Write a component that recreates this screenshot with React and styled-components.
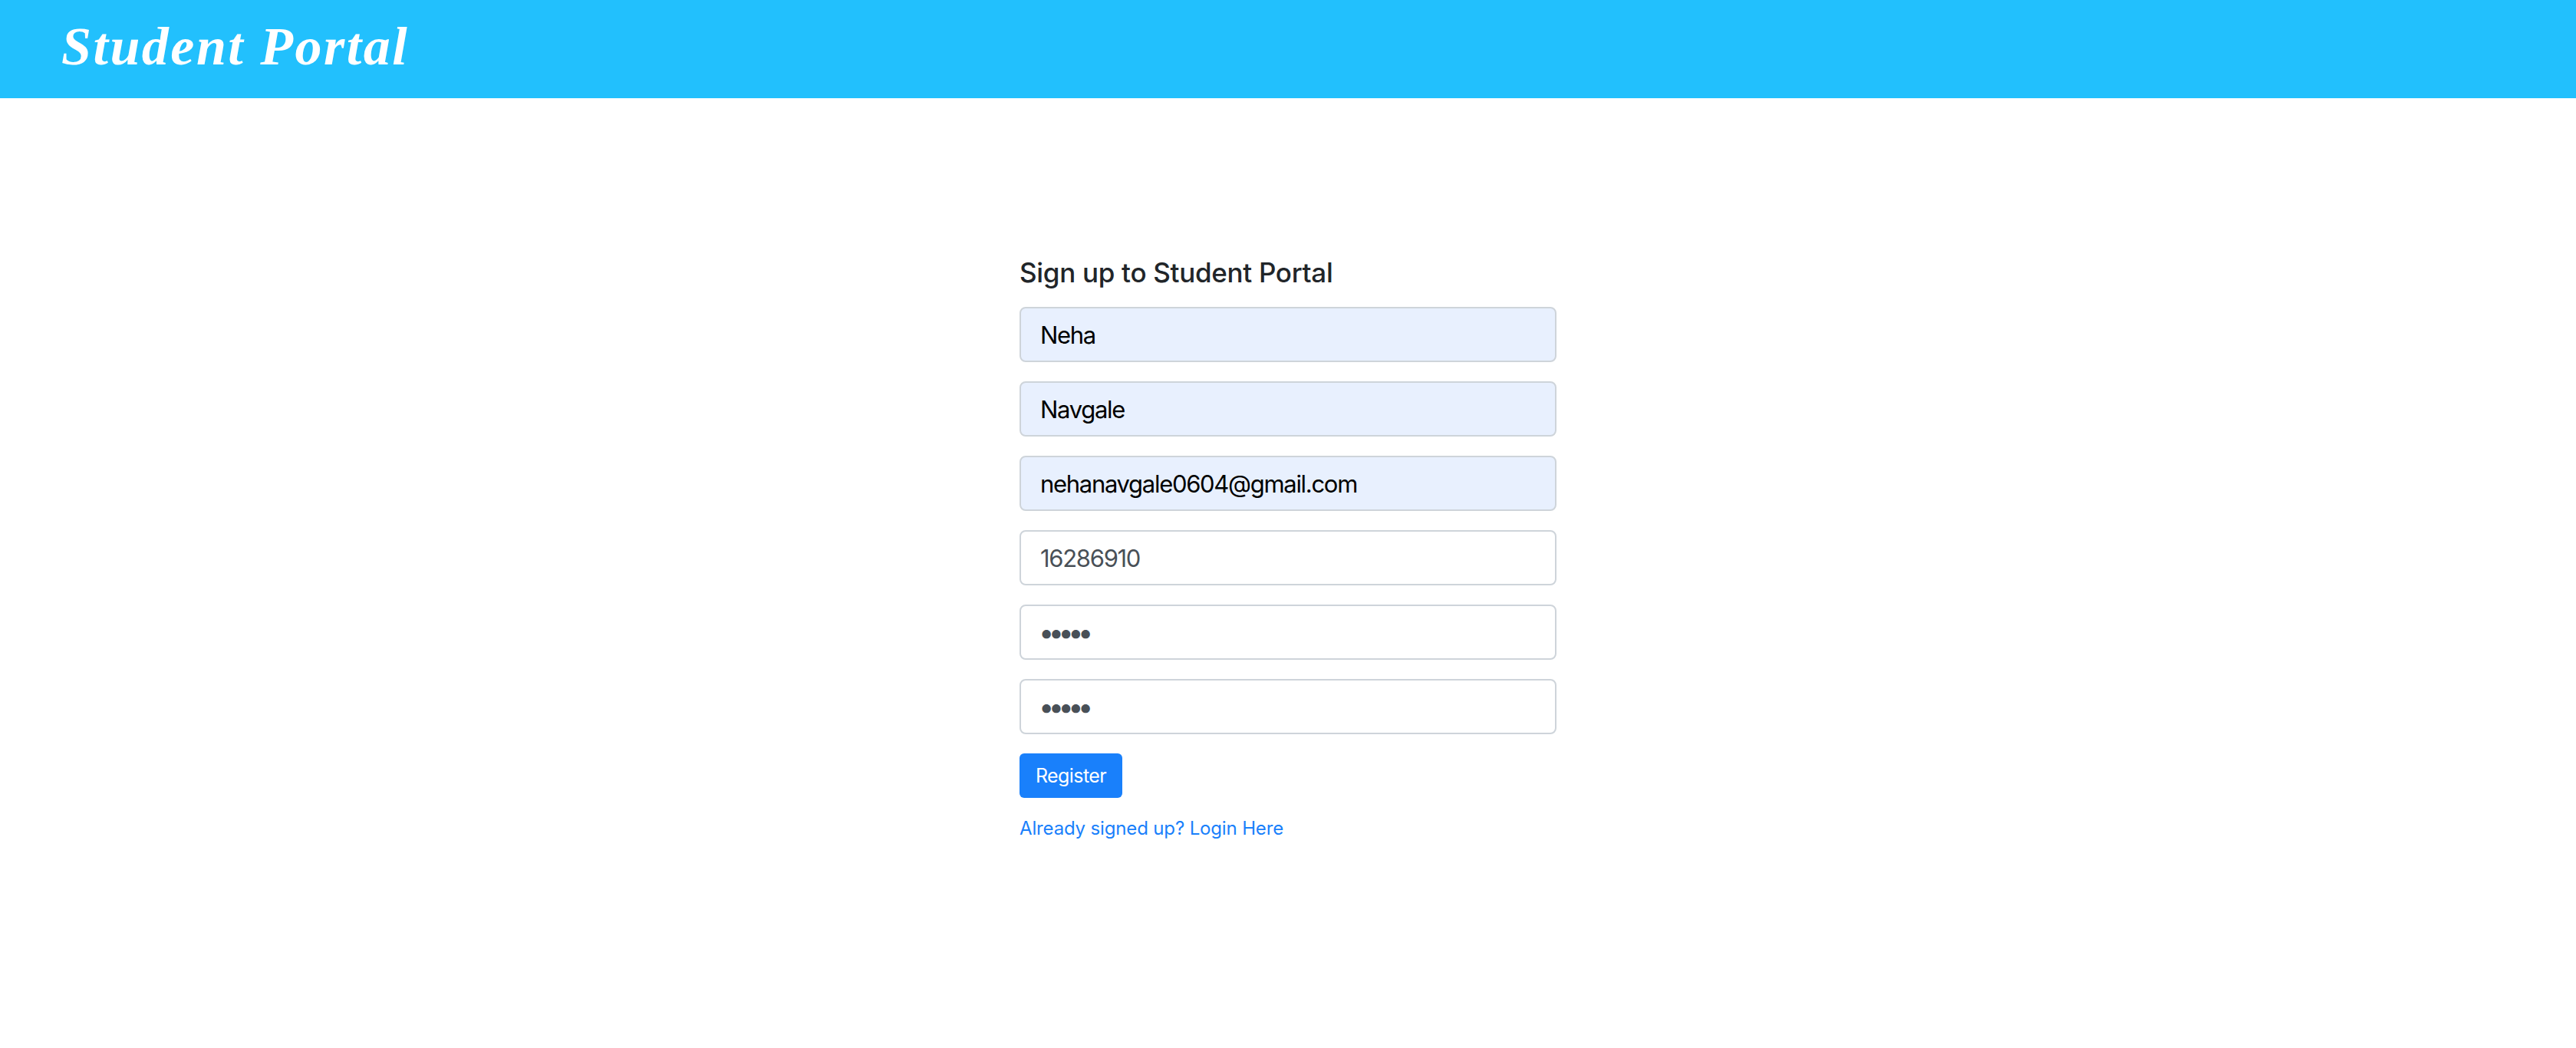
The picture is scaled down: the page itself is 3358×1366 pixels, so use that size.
import React from 'react'
import styled, { createGlobalStyle } from 'styled-components'

const GlobalStyle = createGlobalStyle`
  body {
    margin: 0;
    font-family: Inter, "Noto Sans", sans-serif;
    background: #ffffff;
    color: #212529;
  }
`

const Header = styled.header`
  height: 128px;
  background: #22c0fd;
  display: flex;
  align-items: center;
  padding: 0 0 6px 80px;
  box-sizing: border-box;
`
const Brand = styled.h1`
  margin: 0;
  color: white;
  font-family: "Liberation Serif", Georgia, serif;
  font-weight: bold;
  font-style: italic;
  font-size: 70px;
  letter-spacing: 2.5px;
  line-height: 1;
`
const Main = styled.main`
  display: flex;
  justify-content: center;
  padding-top: 206px;
`
const SignupForm = styled.form`
  width: 700px;
  display: flex;
  flex-direction: column;
  align-items: flex-start;
`
const Title = styled.h5`
  margin: 0 0 24px;
  font-size: 35px;
  font-weight: 500;
  letter-spacing: -0.3px;
  line-height: 42px;
  color: #212529;
`
const Field = styled.input`
  width: 100%;
  height: 72px;
  box-sizing: border-box;
  margin: 0 0 25px;
  padding: 0 ${(p) => (p.type === 'password' ? '23px' : '25px')};
  border: 2px solid #ced4da;
  border-radius: 8px;
  font-family: Inter, "Noto Sans", sans-serif;
  font-size: ${(p) => (p.type === 'password' ? '36px' : '31px')};
  letter-spacing: ${(p) => (p.type === 'password' ? '-7.5px' : '-1.3px')};
  color: ${(p) => (p.$filled ? '#000000' : '#495057')};
  background: ${(p) => (p.$filled ? '#e8f0fe' : '#ffffff')};
  outline: none;
`
const RegisterButton = styled.button`
  height: 58px;
  padding: 0 21px;
  border: none;
  border-radius: 6px;
  background: #1980fb;
  color: white;
  font-family: Inter, "Noto Sans", sans-serif;
  font-size: 25px;
  letter-spacing: -0.6px;
  cursor: pointer;
`
const LoginLink = styled.a`
  margin-top: 22px;
  font-size: 24px;
  letter-spacing: -0.15px;
  line-height: 36px;
  color: #1980fb;
  text-decoration: none;
`

export default function App() {
  return (
    <>
      <GlobalStyle />
      <Header>
        <Brand>Student Portal</Brand>
      </Header>
      <Main>
        <SignupForm onSubmit={(e) => e.preventDefault()}>
          <Title>Sign up to Student Portal</Title>
          <Field $filled type="text" defaultValue="Neha" />
          <Field $filled type="text" defaultValue="Navgale" />
          <Field $filled type="email" defaultValue="nehanavgale0604@gmail.com" />
          <Field type="text" defaultValue="16286910" />
          <Field type="password" defaultValue="12345" />
          <Field type="password" defaultValue="12345" />
          <RegisterButton type="submit">Register</RegisterButton>
          <LoginLink href="#">Already signed up? Login Here</LoginLink>
        </SignupForm>
      </Main>
    </>
  )
}
